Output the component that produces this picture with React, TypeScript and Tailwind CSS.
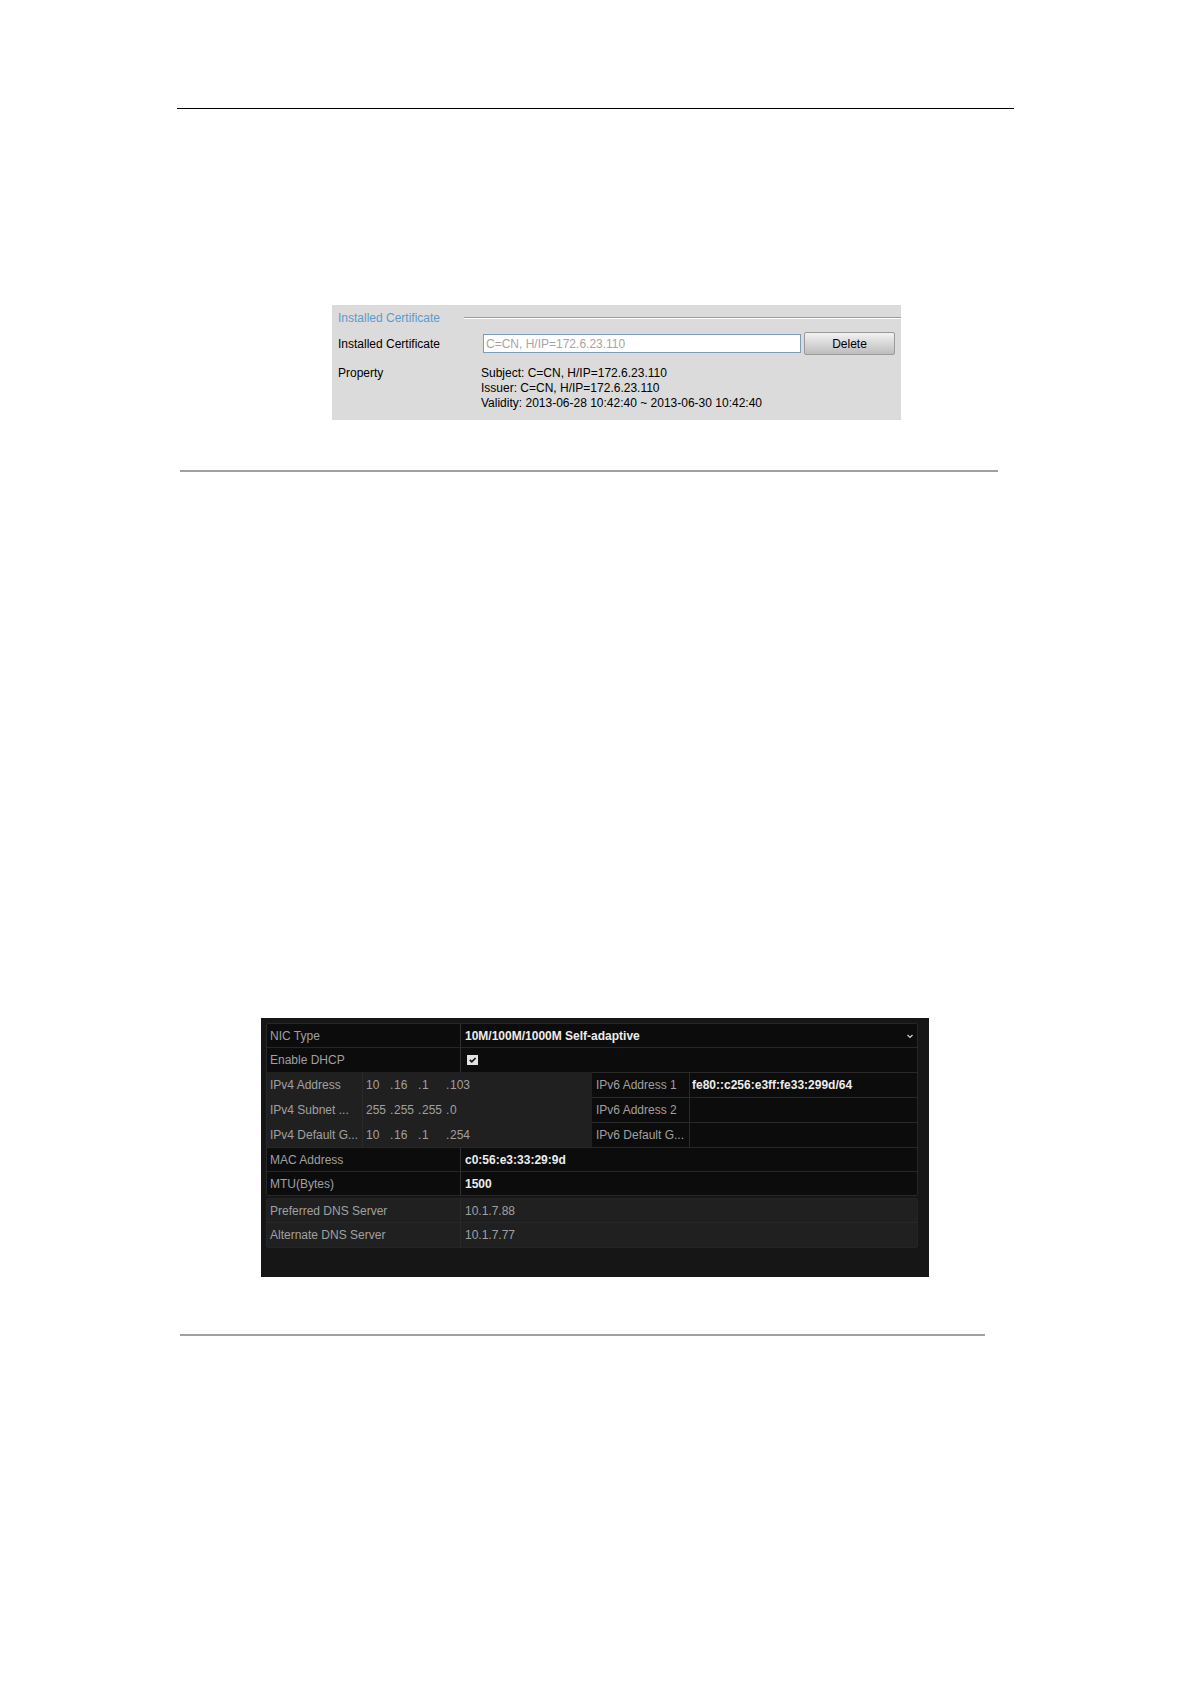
import React, { useState } from 'react';

const certificate = {
    name: 'C=CN, H/IP=172.6.23.110',
    properties: [
        'Subject: C=CN, H/IP=172.6.23.110',
        'Issuer: C=CN, H/IP=172.6.23.110',
        'Validity: 2013-06-28 10:42:40 ~ 2013-06-30 10:42:40',
    ],
};

const addressRows = [
    { id: 'address', v4: 'IPv4 Address', octets: ['10', '16', '1', '103'], v6: 'IPv6 Address 1', value: 'fe80::c256:e3ff:fe33:299d/64' },
    { id: 'subnet', v4: 'IPv4 Subnet ...', octets: ['255', '255', '255', '0'], v6: 'IPv6 Address 2', value: '' },
    { id: 'gateway', v4: 'IPv4 Default G...', octets: ['10', '16', '1', '254'], v6: 'IPv6 Default G...', value: '' },
];

const dnsServers = [
    { id: 'preferred-dns', label: 'Preferred DNS Server', value: '10.1.7.88' },
    { id: 'alternate-dns', label: 'Alternate DNS Server', value: '10.1.7.77' },
];

const CertificatePanel = () => (
    <section className="ml-[155px] mr-[113px] mt-[196px] bg-[#dbdbdb] pb-[9px] text-xs text-black">
        <div className="flex items-center pl-[6px] pt-[5px]">
            <h2 className="w-[126px] leading-4 text-[#5b9bcb]">Installed Certificate</h2>
            <div className="h-[2px] flex-1 border-t border-[#9c9c9c] bg-white" />
        </div>
        <div className="mt-[6px] flex items-center pl-[6px] pr-[6px]">
            <label htmlFor="certificate" className="w-[145px]">Installed Certificate</label>
            <input
                id="certificate"
                readOnly
                value={certificate.name}
                className="h-[19px] min-w-0 flex-1 border border-[#7f9db9] bg-white px-[2px] text-[#a8a4a4] outline-none"
            />
            <button className="ml-[3px] h-[23px] w-[91px] rounded-[2px] border border-[#9a9a9a] bg-linear-to-b from-[#f2f2f2] to-[#bdbdbd]">
                Delete
            </button>
        </div>
        <div className="mt-[11px] flex pl-[6px] leading-[15px]">
            <div className="w-[143px]">Property</div>
            <div>
                {certificate.properties.map((line) => (
                    <p key={line}>{line}</p>
                ))}
            </div>
        </div>
    </section>
);

const NetworkPanel = () => {
    const [dhcp, setDhcp] = useState(true);

    return (
        <section className="ml-[84px] mr-[85px] mt-[546px] bg-[#161616] pb-[29px] pl-[5px] pr-[11px] pt-[5px] text-xs text-[#a0a0a0]">
            <div className="rounded-[2px] border border-[#272727] bg-[#0c0c0c]">
                <div className="flex h-[24px] items-stretch border-b border-[#272727]">
                    <label htmlFor="nic" className="flex w-[194px] items-center border-r border-[#303030] pl-[3px]">NIC Type</label>
                    <div className="relative flex-1">
                        <select id="nic" className="h-full w-full appearance-none bg-transparent pl-1 text-xs font-bold text-[#ededed] outline-none">
                            <option>10M/100M/1000M Self-adaptive</option>
                        </select>
                        <svg className="pointer-events-none absolute right-[4px] top-[10px] h-[5px] w-[6px]" viewBox="0 0 6 5" fill="none" stroke="#d0d0d0" strokeWidth="1.3">
                            <path d="M0.5 1 L3 3.4 L5.5 1" />
                        </svg>
                    </div>
                </div>
                <div className="flex h-[24px] items-stretch">
                    <label htmlFor="dhcp" className="flex w-[194px] items-center border-r border-[#303030] pl-[3px]">Enable DHCP</label>
                    <div className="grid items-center justify-items-center pl-[6px]">
                        <input
                            id="dhcp"
                            type="checkbox"
                            checked={dhcp}
                            onChange={(e) => setDhcp(e.target.checked)}
                            className="col-start-1 row-start-1 h-[10px] w-[11px] appearance-none bg-[#e2e2e2]"
                        />
                        {dhcp && (
                            <svg className="pointer-events-none col-start-1 row-start-1 h-[10px] w-[11px]" viewBox="0 0 11 10" fill="none" stroke="#111" strokeWidth="1.7">
                                <path d="M2.8 4.8 L4.8 6.8 L8.6 3" />
                            </svg>
                        )}
                    </div>
                </div>

                {addressRows.map((row) => (
                    <div key={row.id} className="flex h-[25px] items-stretch">
                        <div className="flex flex-1 items-stretch bg-[#202020]">
                            <div className="flex w-[96px] items-center whitespace-nowrap border-r border-[#292929] pl-[3px]">{row.v4}</div>
                            <div className="flex items-center pl-[3px]">
                                {row.octets.map((octet, i) => (
                                    <React.Fragment key={i}>
                                        {i > 0 && <span className="w-[4px]">.</span>}
                                        <input
                                            aria-label={`${row.v4} part ${i + 1}`}
                                            disabled
                                            value={octet}
                                            className="w-[24px] bg-transparent"
                                        />
                                    </React.Fragment>
                                ))}
                            </div>
                        </div>
                        <label htmlFor={`v6-${row.id}`} className="flex w-[98px] items-center whitespace-nowrap border-r border-t border-[#292929] pl-[4px]">
                            {row.v6}
                        </label>
                        <input
                            id={`v6-${row.id}`}
                            defaultValue={row.value}
                            className="w-[227px] border-t border-[#292929] bg-transparent pl-[2px] text-xs font-bold text-[#ededed] outline-none"
                        />
                    </div>
                ))}

                <div className="flex h-[24px] items-stretch border-t border-[#272727]">
                    <label htmlFor="mac" className="flex w-[194px] items-center border-r border-[#303030] pl-[3px]">MAC Address</label>
                    <input id="mac" readOnly value="c0:56:e3:33:29:9d" className="min-w-0 flex-1 bg-transparent pl-1 text-xs font-bold text-[#ededed] outline-none" />
                </div>
                <div className="flex h-[24px] items-stretch border-t border-[#272727]">
                    <label htmlFor="mtu" className="flex w-[194px] items-center border-r border-[#303030] pl-[3px]">MTU(Bytes)</label>
                    <input id="mtu" defaultValue="1500" className="min-w-0 flex-1 bg-transparent pl-1 text-xs font-bold text-[#ededed] outline-none" />
                </div>
            </div>

            <div className="mt-[2px] divide-y divide-[#272727] rounded-[2px] border border-[#252525] bg-[#202020]">
                {dnsServers.map((server) => (
                    <div key={server.id} className="flex h-[24px] items-stretch">
                        <label htmlFor={server.id} className="flex w-[194px] items-center border-r border-[#292929] pl-[3px]">{server.label}</label>
                        <input id={server.id} disabled value={server.value} className="min-w-0 flex-1 bg-transparent pl-1" />
                    </div>
                ))}
            </div>
        </section>
    );
};

const App = () => {
    return (
        <main className="min-h-screen bg-white px-[177px] pt-[108px] font-['Liberation_Sans',Arial,sans-serif]">
            <hr className="border-t border-black" />
            <CertificatePanel />
            <hr className="ml-[3px] mr-[16px] mt-[50px] border-t-2 border-[#a0a0a0]" />
            <NetworkPanel />
            <hr className="ml-[3px] mr-[29px] mt-[57px] border-t-2 border-[#a0a0a0]" />
        </main>
    );
};

export default App;
